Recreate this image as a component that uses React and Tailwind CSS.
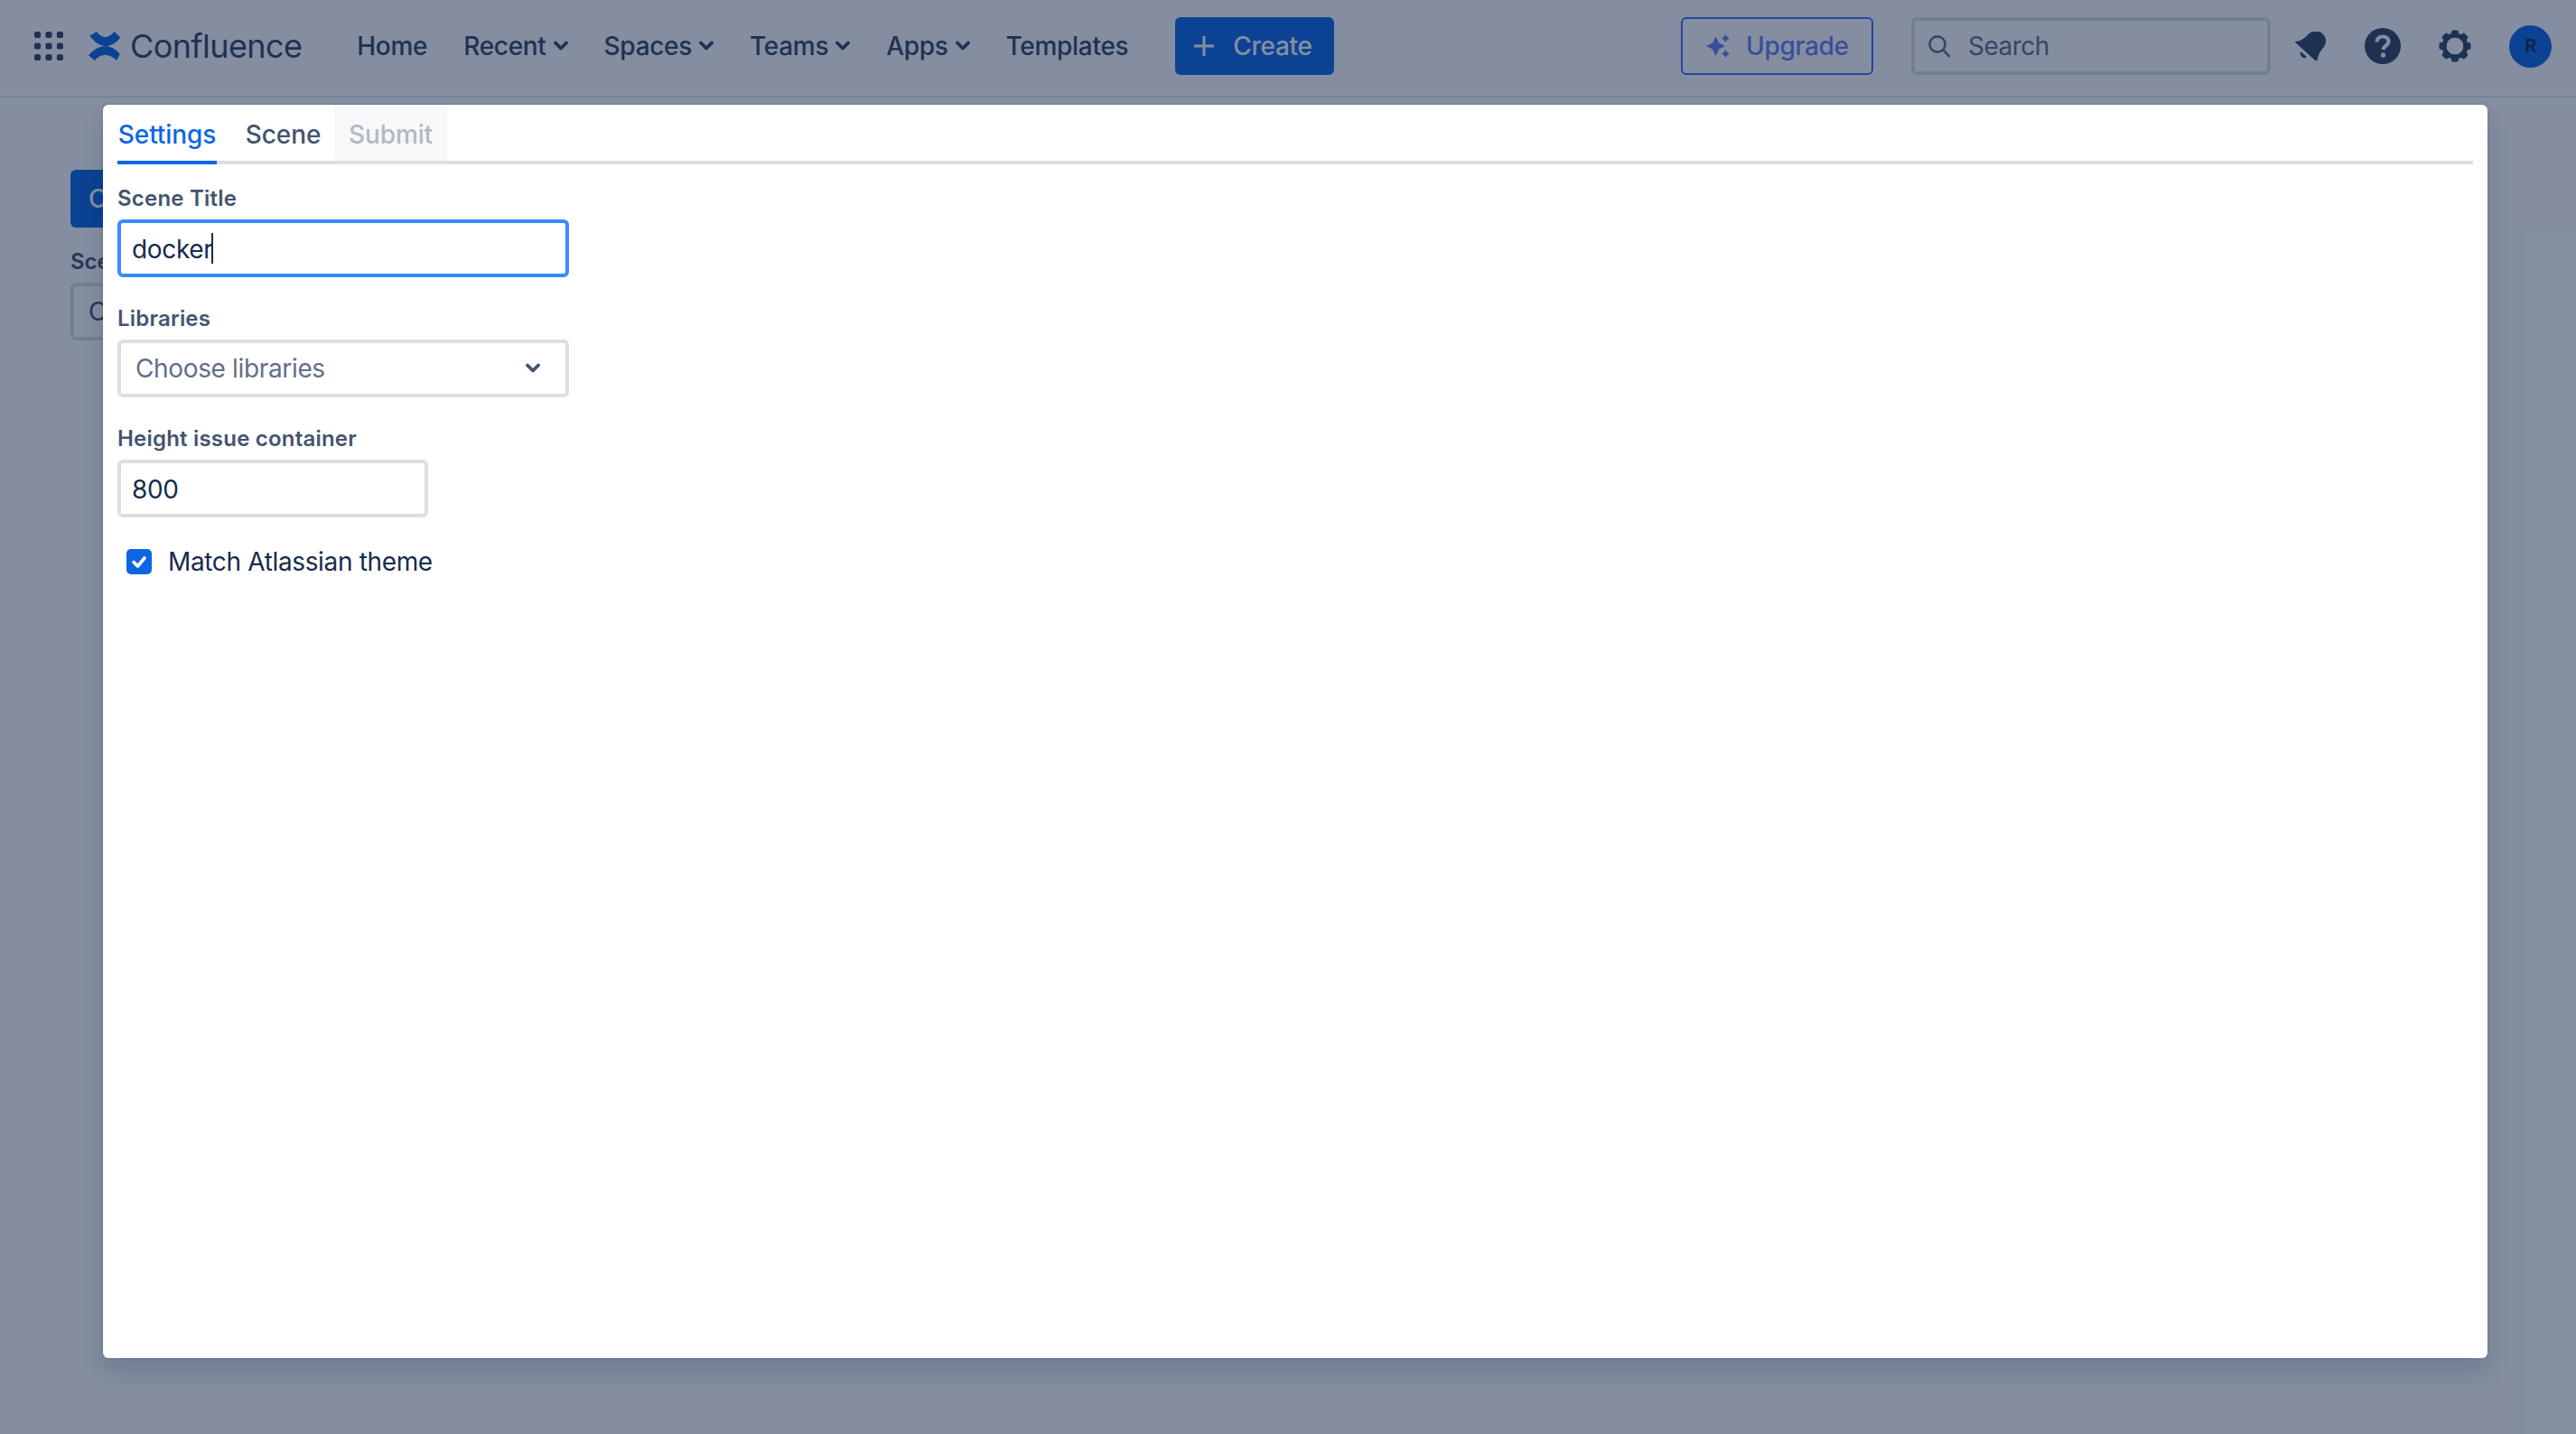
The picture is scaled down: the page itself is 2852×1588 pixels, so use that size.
import React from "react";

const Chevron = ({ className = "" }) => (
  <svg viewBox="0 0 16 12" className={className} fill="none" stroke="currentColor" strokeWidth="3.8" strokeLinecap="round" strokeLinejoin="round">
    <path d="M2 2.5 L8 8.5 L14 2.5" />
  </svg>
);

const GridIcon = () => (
  <svg viewBox="0 0 32 32" className="h-8 w-8" fill="currentColor">
    {[3.5, 16, 28.5].map((y) =>
      [3.5, 16, 28.5].map((x) => <rect key={`${x}-${y}`} x={x - 3.6} y={y - 3.6} width="7.2" height="7.2" rx="2.6" />)
    )}
  </svg>
);

const Logo = () => (
  <svg viewBox="205 30 104 94" className="h-8 w-9" fill="#0c66e4">
    <path d="M208 44 L230 30 Q 258 66 288 30 L308 50 Q 258 108 208 44 Z" />
    <path d="M204 107 Q 256 50 306 102 L296 124 Q 256 88 224 124 Z" />
  </svg>
);

const NavItem = ({ label, chevron }) => (
  <div className="flex items-center gap-2">
    <span>{label}</span>
    {chevron && <Chevron className="h-3 w-4" />}
  </div>
);

const Sparkle = () => (
  <svg viewBox="0 0 26 26" className="h-[26px] w-[26px]" fill="currentColor">
    <path d="M10.5 2.5 L14 9.5 L21 13 L14 16.5 L10.5 24 L7 16.5 L0 13 L7 9.5 Z" />
    <path d="M21.5 0 L23.2 2.8 L26 4.5 L23.2 6.2 L21.5 9 L19.8 6.2 L17 4.5 L19.8 2.8 Z" />
    <path d="M21.5 17 L23.2 19.8 L26 21.5 L23.2 23.2 L21.5 26 L19.8 23.2 L17 21.5 L19.8 19.8 Z" />
  </svg>
);

const Bell = () => (
  <svg viewBox="0 0 36 32" className="h-8 w-9" fill="currentColor">
    <g transform="rotate(42 18 16) translate(18 15.5) scale(1.72) translate(-12 -12)">
      <path d="M12 1.5a6.5 6.5 0 0 0-6.5 6.5c0 5-1.5 7.5-3.5 9.5h20c-2-2-3.5-4.5-3.5-9.5A6.5 6.5 0 0 0 12 1.5z" />
      <path d="M9.5 19.5h5a2.5 2 0 0 1-5 0z" />
    </g>
  </svg>
);

const Help = () => (
  <svg viewBox="0 0 40 40" className="h-10 w-10">
    <circle cx="20" cy="20" r="20" fill="currentColor" />
    <path d="M13.5 15.5 C13.5 11.5 16.5 9.5 20 9.5 C24 9.5 26.5 12 26.5 15 C26.5 19 21 19.5 20.5 24" fill="none" stroke="#fff" strokeWidth="4.2" />
    <circle cx="20.5" cy="30" r="2.7" fill="#fff" />
  </svg>
);

const Gear = () => (
  <svg viewBox="0 0 38 36" className="h-9 w-[38px]" fill="currentColor">
    <circle cx="19" cy="18" r="12" fill="none" stroke="currentColor" strokeWidth="5" />
    {[0, 45, 90, 135, 180, 225, 270, 315].map((a) => (
      <rect key={a} x="15" y="0.5" width="8" height="8" rx="2" transform={`rotate(${a} 19 18)`} />
    ))}
  </svg>
);

const Search = () => (
  <svg viewBox="0 0 26 26" className="h-[26px] w-[26px]" fill="none" stroke="currentColor" strokeWidth="2.6" strokeLinecap="round">
    <circle cx="11" cy="11" r="8.6" />
    <path d="M17.5 17.5 L24 24" />
  </svg>
);

const Field = ({ label, children }) => (
  <div className="mb-[29px]">
    <div className="mb-[7px] pt-px text-[24px] leading-8 font-semibold tracking-[0.2px] text-[#44546f]">{label}</div>
    {children}
  </div>
);

export default function App() {
  return (
    <div className="relative h-screen w-screen overflow-hidden bg-white font-['Inter',sans-serif]">
      <header className="flex h-[108px] items-center border-b-2 border-[#e6e7eb] pr-[27px] pb-1 pl-[38px] text-[28px] font-medium tracking-[-0.3px] text-[#344563]">
        <GridIcon />
        <div className="ml-7 text-[#0c66e4]"><Logo /></div>
        <span className="ml-[10px] text-[36px] font-normal tracking-[-0.6px]">Confluence</span>
        <nav className="ml-[61px] flex items-center gap-10">
          <NavItem label="Home" />
          <NavItem label="Recent" chevron />
          <NavItem label="Spaces" chevron />
          <NavItem label="Teams" chevron />
          <NavItem label="Apps" chevron />
          <NavItem label="Templates" />
        </nav>
        <button className="ml-[52px] flex h-16 w-[176px] items-center gap-[20px] rounded-[6px] bg-[#0c66e4] pl-5 text-white">
          <svg viewBox="0 0 24 24" className="h-6 w-6" fill="none" stroke="currentColor" strokeWidth="3">
            <path d="M12 1 V23 M1 12 H23" />
          </svg>
          <span>Create</span>
        </button>
        <button className="ml-auto flex h-16 w-[213px] items-center gap-[18px] rounded-[6px] border-2 border-[#3f70fa] pl-[26px] text-[#6a7cf5]">
          <Sparkle />
          <span>Upgrade</span>
        </button>
        <div className="ml-[42px] flex h-16 w-[398px] items-center gap-[19px] rounded-[6px] border-4 border-[#dcdfe4] pl-[14px] font-normal tracking-[-0.5px] text-[#626f86]">
          <Search />
          <span>Search</span>
        </div>
        <div className="ml-[27px] flex items-center gap-[41px] text-[#344563]">
          <Bell />
          <Help />
          <Gear />
          <div className="flex h-[47px] w-[47px] items-center justify-center rounded-full bg-[#0c66e4] text-[20px] font-semibold text-[#172b4d]">R</div>
        </div>
      </header>

      <main className="pt-20 pl-[78px]">
        <button className="h-16 w-[200px] rounded-[6px] bg-[#0c66e4] pl-[20px] text-left text-[28px] font-medium text-white">C</button>
        <div className="mt-[22px] text-[24px] leading-8 font-semibold text-[#44546f]">Sce</div>
        <div className="mt-[7px] flex h-16 w-[300px] items-center rounded-[6px] border-4 border-[#dcdfe4] pl-4 text-[28px] text-[#44546f]">C</div>
      </main>

      <div className="absolute inset-0 bg-[#091e42]/50" />

      <div className="absolute top-[116px] left-[114px] h-[1388px] w-[2640px] rounded-[6px] bg-white px-4 shadow-[0_16px_24px_rgba(9,30,66,0.15),0_0_2px_rgba(9,30,66,0.31)]">
        <div className="flex h-[66px] border-b-4 border-[#dcdfe4] text-[28px] font-medium tracking-[-0.1px]">
          <div className="-mb-1 flex h-[66px] w-[110px] items-center justify-center border-b-4 border-[#0c66e4] pt-1 text-[#0c66e4]">Settings</div>
          <div className="ml-[17px] flex h-[62px] w-[113px] items-center justify-center pt-1 text-[#44546f]">Scene</div>
          <div className="flex h-[62px] w-[125px] items-center justify-center bg-[#f7f8f9] pt-1 text-[#b3b9c4]">Submit</div>
        </div>

        <div className="pt-[21px] text-[28px] tracking-[-0.35px]">
          <Field label="Scene Title">
            <div className="flex h-16 w-[500px] items-center rounded-[6px] border-4 border-[#388bff] bg-white pl-3 text-[#172b4d]">
              <span className="pt-[2px]">docker</span>
              <span className="-ml-px h-[34px] w-[2px] bg-[#172b4d]" />
            </div>
          </Field>
          <Field label="Libraries">
            <div className="flex h-16 w-[500px] items-center justify-between rounded-[6px] border-4 border-[#dcdfe4] bg-white pr-7 pl-4 text-[#626f86]">
              <span>Choose libraries</span>
              <Chevron className="h-3 w-4 text-[#44546f]" />
            </div>
          </Field>
          <Field label="Height issue container">
            <div className="flex h-16 w-[344px] items-center rounded-[6px] border-4 border-[#dcdfe4] bg-white pt-px pl-3 text-[#172b4d]">800</div>
          </Field>
          <div className="-mt-px ml-[10px] flex items-center gap-[18px] text-[#172b4d]">
            <span className="flex h-7 w-7 items-center justify-center rounded-[5px] bg-[#0c66e4]">
              <svg viewBox="0 0 20 20" className="h-5 w-5" fill="none" stroke="#fff" strokeWidth="3.6" strokeLinecap="round" strokeLinejoin="round">
                <path d="M4 10.5 L8.5 15 L16 6" />
              </svg>
            </span>
            <span>Match Atlassian theme</span>
          </div>
        </div>
      </div>
    </div>
  );
}
